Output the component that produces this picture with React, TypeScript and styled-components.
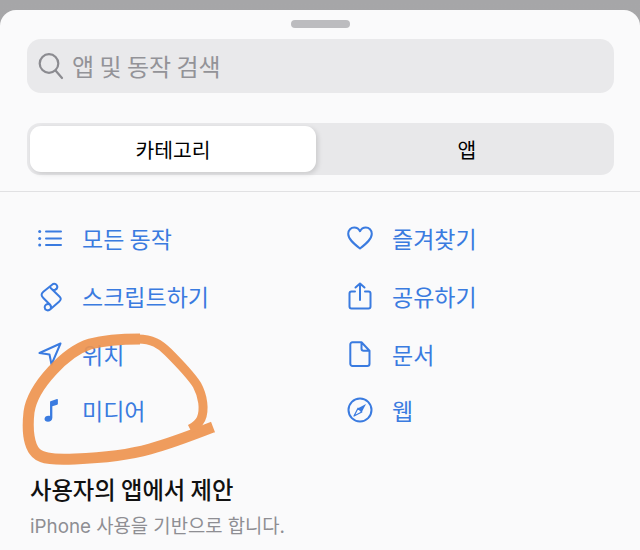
import React from "react";
import styled, { createGlobalStyle } from "styled-components";

const Global = createGlobalStyle`
  html, body { margin: 0; padding: 0; background: #a9a9ab; }
  body { width: 640px; height: 550px; overflow: hidden; font-family: "Noto Sans CJK KR", "Noto Sans", sans-serif; }
`;
const Page = styled.div`
  position: relative;
  width: 640px;
  height: 550px;
  padding-top: 10px;
  box-sizing: border-box;
  overflow: hidden;
  background: linear-gradient(#a6a6a8, #adadaf);
`;
const Sheet = styled.main`
  height: 540px;
  background: #fafafb;
  border-radius: 16px 16px 0 0;
  display: flex;
  flex-direction: column;
`;
const Handle = styled.div`
  width: 59px;
  height: 8px;
  border-radius: 4px;
  background: #bcbcbf;
  margin: 10px auto 11px;
`;
const Search = styled.div`
  height: 54px;
  margin: 0 26px 0 27px;
  border-radius: 14px;
  background: #e9e9eb;
  display: flex;
  align-items: center;
  padding-left: 11px;
  gap: 8px;
  color: #939398;
  font-size: 24px;
`;
const SearchLabel = styled.span`
  padding-bottom: 2px;
`;
const Segments = styled.div`
  height: 52px;
  margin: 30px 26px 0 27px;
  border-radius: 13px;
  background: #e8e8ea;
  display: grid;
  grid-template-columns: 286px 1fr;
  padding: 3px;
  box-sizing: border-box;
`;
const Segment = styled.div<{ $active?: boolean }>`
  display: flex;
  align-items: center;
  justify-content: center;
  border-radius: 11px;
  font-size: 20.4px;
  font-weight: 400;
  color: #000;
  padding-left: ${(p) => (p.$active ? "0" : "7px")};
  background: ${(p) => (p.$active ? "#fff" : "transparent")};
  box-shadow: ${(p) => (p.$active ? "2px 2px 5px rgba(0,0,0,.13)" : "none")};
`;
const Divider = styled.hr`
  border: 0;
  height: 1px;
  background: #e1e1e3;
  margin: 16px 0 0;
`;
const Actions = styled.div`
  display: grid;
  grid-template-columns: 310px 1fr;
  grid-template-rows: 58px 58px 57px 56px;
  padding: 17px 0 0 31px;
`;
const Action = styled.div`
  display: flex;
  align-items: center;
  gap: 13px;
  color: #3a7be0;
  font-size: 23px;
  line-height: 30px;
`;
const IconBox = styled.span`
  width: 38px;
  height: 38px;
  display: flex;
  align-items: center;
  justify-content: center;
  flex: none;
`;
const Suggest = styled.section`
  padding: 35px 0 0 30px;
`;
const Title = styled.h2`
  margin: 0;
  font-size: 23.3px;
  line-height: 32px;
  font-weight: 500;
  color: #111;
`;
const Sub = styled.p`
  margin: 10px 0 0;
  font-size: 18.800px;
  line-height: 24px;
  color: #8e8e93;
  font-family: "Inter", "Noto Sans CJK KR", sans-serif;
`;
const Scribble = styled.svg`
  position: absolute;
  inset: 0;
  pointer-events: none;
  filter: blur(0.5px);
`;

const S = { fill: "none", stroke: "#3a7be0", strokeWidth: 2, strokeLinecap: "round", strokeLinejoin: "round" } as const;

const icons: Record<string, React.ReactNode> = {
  list: (
    <svg width="24" height="18" viewBox="0 0 24 18" {...S}>
      <path d="M8 2.500h15M8 9.500h15M8 16h15" />
      <g fill="#3a7be0" stroke="none"><circle cx="1.700" cy="2.500" r="1.500" /><circle cx="1.700" cy="9.500" r="1.500" /><circle cx="1.700" cy="16" r="1.500" /></g>
    </svg>
  ),
  script: (
    <svg width="25" height="32" viewBox="50 18 75 96" {...S} strokeWidth="6">
      <path d="M105 45C112 38 105 27 95 30L66 53C58 60 60 66 66 72L84 90" />
      <path d="M105 45C100 50 92 48 88 42M88 42L115 68C120 73 119 78 113 83L88 105C80 113 70 108 70 100C70 93 76 89 82 90C88 92 90 98 88 105" />
    </svg>
  ),
  location: (
    <svg width="24" height="24" viewBox="0 0 24 24" {...S}>
      <path d="M22.500 1.500 1.500 11l10 1.500 2 10z" />
    </svg>
  ),
  music: (
    <svg width="17" height="24" viewBox="0 0 18 26">
      <path fill="#3a7be0" d="M9 3.500 16 1.200c.6-.2 1 .2 1 .7v4.400c0 .5-.3.800-.7.900L11 9v12.500c0 2.600-2.300 4.300-4.700 4.300C3.900 25.800 2.500 24.500 2.500 22.800c0-2.300 2-3.600 4.300-3.600.7 0 1.300.1 1.700.3V4.500c0-.5.100-.8.500-1z" />
    </svg>
  ),
  heart: (
    <svg width="26" height="24" viewBox="0 0 26 24" {...S}>
      <path d="M13 22.500C6.500 17.500 1.200 13 1.200 7.800 1.200 4 4 1.500 7.200 1.500c2.500 0 4.600 1.300 5.800 3.700 1.200-2.400 3.300-3.700 5.800-3.700 3.200 0 6 2.500 6 6.300C24.800 13 19.500 17.500 13 22.500z" />
    </svg>
  ),
  share: (
    <svg width="24" height="28" viewBox="0 0 24 28" {...S}>
      <path d="M7 9.500H3.500a2 2 0 0 0-2 2v13a2 2 0 0 0 2 2h17a2 2 0 0 0 2-2v-13a2 2 0 0 0-2-2H17M12 18V1.500M7.500 5.500 12 1.500l4.500 4" />
    </svg>
  ),
  doc: (
    <svg width="22" height="26" viewBox="0 0 22 26" {...S}>
      <path d="M3.500 1.200h9l8 8.500v13a2.200 2.200 0 0 1-2.200 2.200H3.500a2.200 2.200 0 0 1-2.200-2.200V3.400a2.200 2.200 0 0 1 2.200-2.200zM12.500 1.200v6.300a2.200 2.200 0 0 0 2.200 2.200h5.800" />
    </svg>
  ),
  compass: (
    <svg width="26" height="26" viewBox="0 0 26 26">
      <circle cx="13" cy="13" r="11.500" fill="none" stroke="#3a7be0" strokeWidth="2" />
      <path fill="#3a7be0" d="M19 7 14.800 15 11 11.200z" />
      <path fill="none" stroke="#3a7be0" strokeWidth="1.200" strokeLinejoin="round" d="M7 19l4-7.800 3.800 3.800z" />
    </svg>
  ),
};

const items: [string, string][] = [
  ["list", "모든 동작"], ["heart", "즐겨찾기"],
  ["script", "스크립트하기"], ["share", "공유하기"],
  ["location", "위치"], ["doc", "문서"],
  ["music", "미디어"], ["compass", "웹"],
];

export default function App() {
  return (
    <Page>
      <Global />
      <Sheet>
        <Handle />
        <Search>
          <svg width="26" height="28" viewBox="0 0 26 28" fill="none" stroke="#8b8b90" strokeWidth="2.200" strokeLinecap="round">
            <circle cx="11" cy="11.500" r="9.300" />
            <path d="m17.500 18.500 6.500 7.500" />
          </svg>
          <SearchLabel>앱 및 동작 검색</SearchLabel>
        </Search>
        <Segments>
          <Segment $active>카테고리</Segment>
          <Segment>앱</Segment>
        </Segments>
        <Divider />
        <Actions>
          {items.map(([icon, label]) => (
            <Action key={label}>
              <IconBox>{icons[icon]}</IconBox>
              {label}
            </Action>
          ))}
        </Actions>
        <Suggest>
          <Title>사용자의 앱에서 제안</Title>
          <Sub>iPhone 사용을 기반으로 합니다.</Sub>
        </Suggest>
      </Sheet>
      <Scribble width="640" height="550" viewBox="0 0 640 550">
        <g fill="none" stroke="#ee9450" strokeLinecap="butt" strokeLinejoin="round" opacity="0.92">
          <path
            strokeWidth="11"
            d="M213 427C195 434 172 443 150 449C125 456 100 458 75 459C55 460 42 459 36 453C29 446 27 430 29 412C31 398 40 384 52 371C62 360 74 349 90 344C105 340 125 339 140 339"
          />
          <path
            strokeWidth="9"
            d="M138 339C152 339 160 344 168 352C178 362 190 374 197 385C203 396 205 410 201 419C198 425 194 427 190 429"
          />
        </g>
      </Scribble>
    </Page>
  );
}
